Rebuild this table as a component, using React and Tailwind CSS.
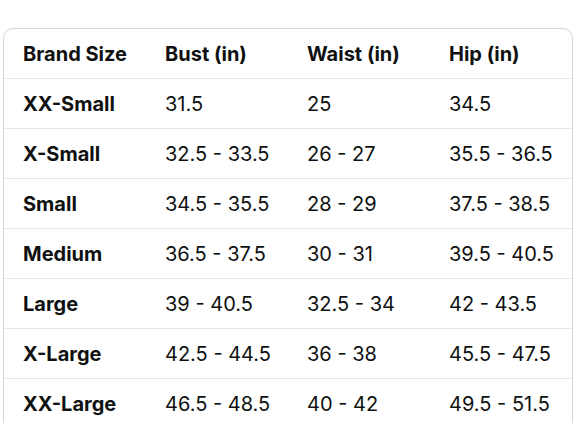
import React from "react";

const HEADERS = ["Brand Size", "Bust (in)", "Waist (in)", "Hip (in)"];

const ROWS = [
    ["XX-Small", "31.5", "25", "34.5"],
    ["X-Small", "32.5 - 33.5", "26 - 27", "35.5 - 36.5"],
    ["Small", "34.5 - 35.5", "28 - 29", "37.5 - 38.5"],
    ["Medium", "36.5 - 37.5", "30 - 31", "39.5 - 40.5"],
    ["Large", "39 - 40.5", "32.5 - 34", "42 - 43.5"],
    ["X-Large", "42.5 - 44.5", "36 - 38", "45.5 - 47.5"],
    ["XX-Large", "46.5 - 48.5", "40 - 42", "49.5 - 51.5"],
];

const App = () => {
    return (
        <div className="w-[588px] h-[441px] bg-white pt-[28px] pl-[3px] pr-[15px] font-['Inter',sans-serif] text-[#0f1111]">
            {/* size chart card */}
            <div className="h-[395px] overflow-hidden border border-b-0 border-[#d5d9d9] rounded-t-[10px]">
                <div className="grid grid-cols-4 h-[50px] items-center pt-[1px] border-b border-[#e3e6e6]">
                    {HEADERS.map((h) => (
                        <div key={h} className="pl-[19px] text-[20px] leading-[24px] font-bold">
                            {h}
                        </div>
                    ))}
                </div>
                {ROWS.map((row) => (
                    <div
                        key={row[0]}
                        className="grid grid-cols-4 h-[50px] items-center pt-[1px] border-b border-[#e3e6e6]"
                    >
                        {row.map((cell, i) => (
                            <div
                                key={i}
                                className={`pl-[19px] text-[20px] leading-[24px] ${i === 0 ? "font-bold" : ""}`}
                            >
                                {cell}
                            </div>
                        ))}
                    </div>
                ))}
            </div>
        </div>
    );
};

export default App;
